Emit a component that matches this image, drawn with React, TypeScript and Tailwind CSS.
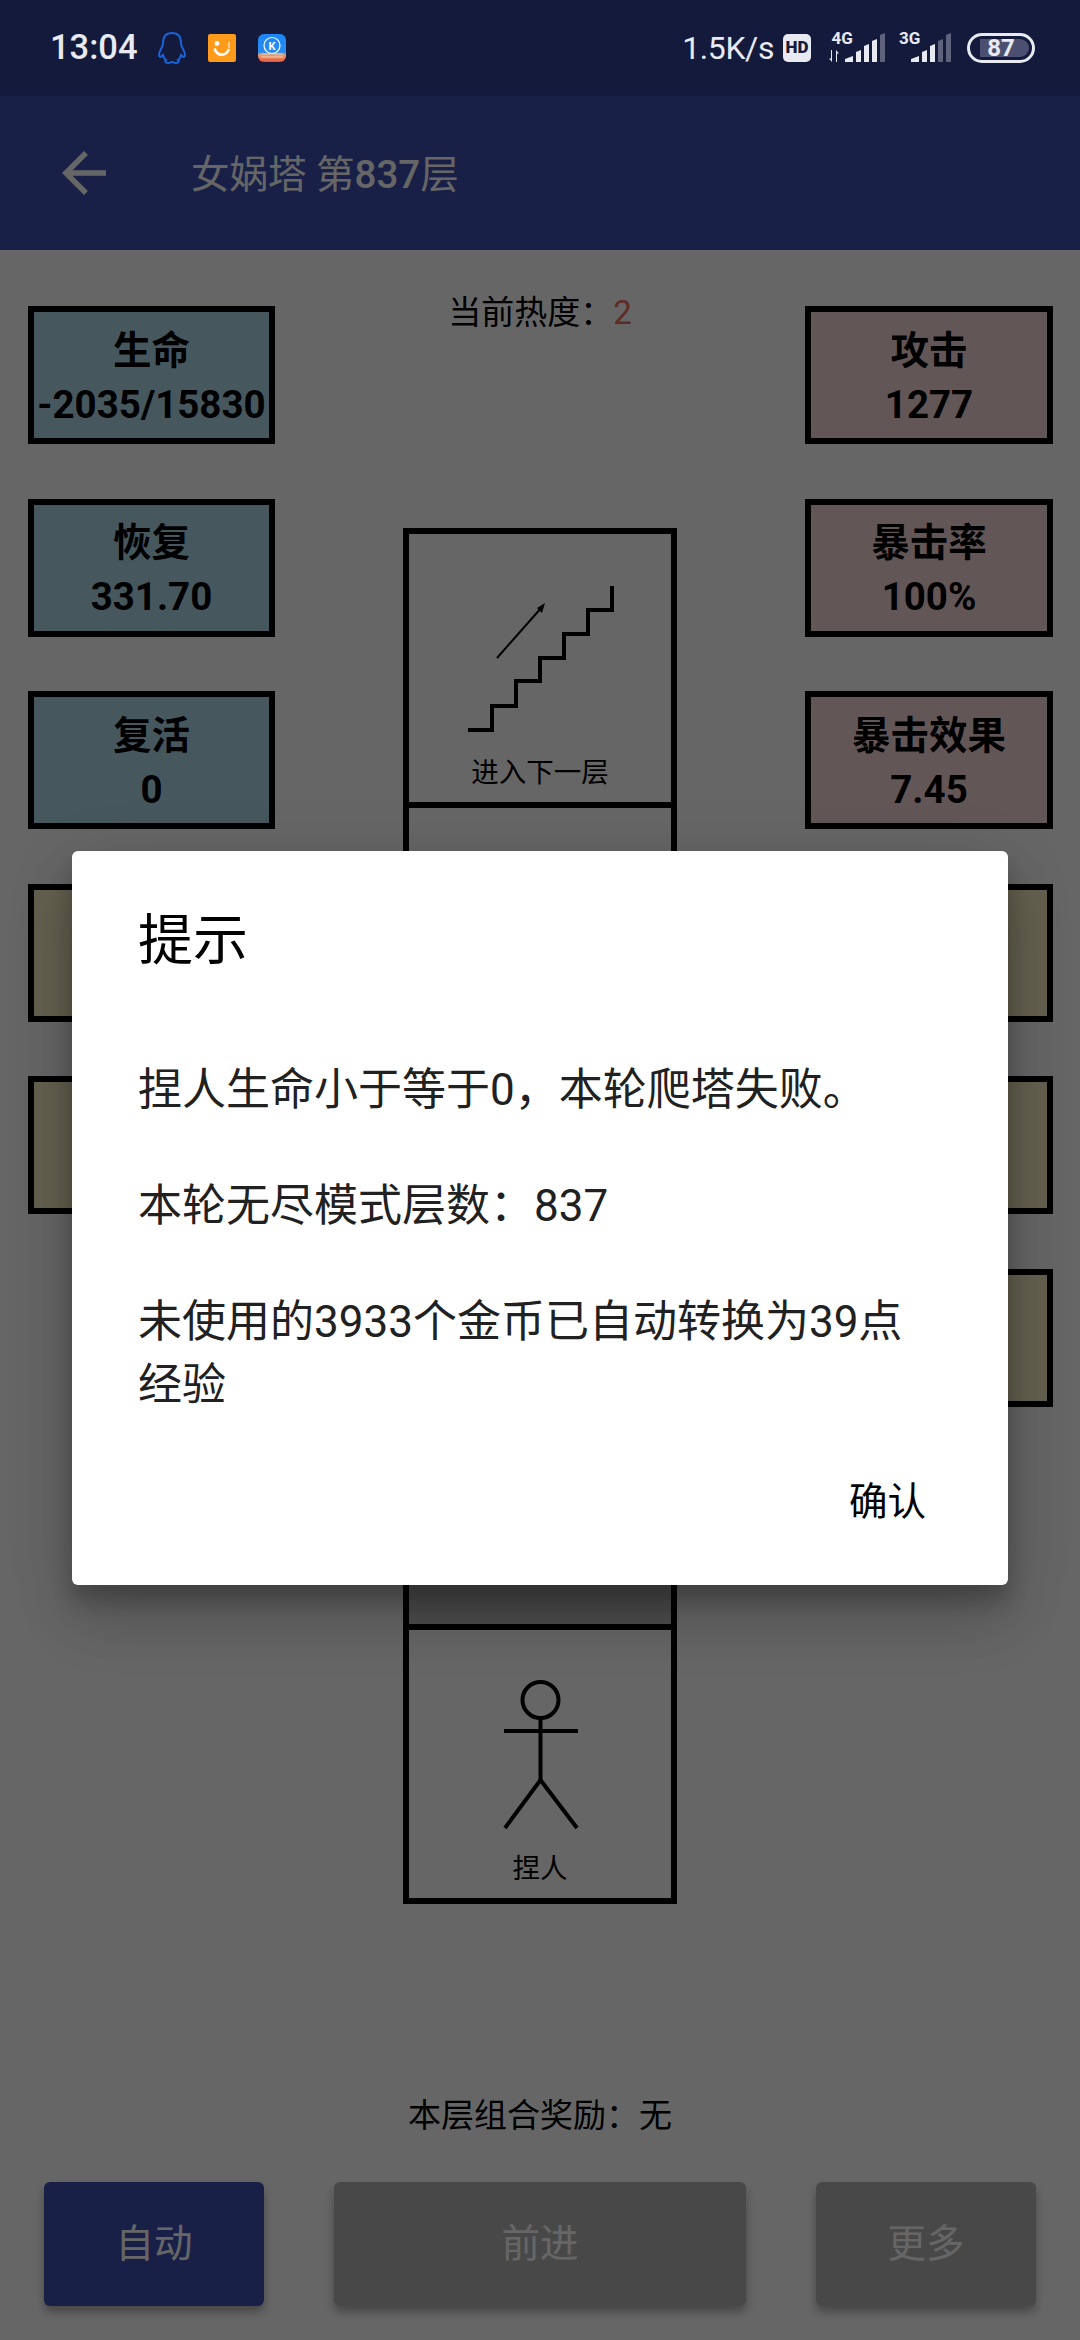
const leftStats = [
  { label: '生命', value: '-2035/15830', color: 'bg-[#b1d9ec]' },
  { label: '恢复', value: '331.70', color: 'bg-[#b1d9ec]' },
  { label: '复活', value: '0', color: 'bg-[#b1d9ec]' },
  { label: '', value: '', color: 'bg-[#faf2c8]' },
  { label: '', value: '', color: 'bg-[#faf2c8]' },
];

const rightStats = [
  { label: '攻击', value: '1277', color: 'bg-[#f8d6d6]' },
  { label: '暴击率', value: '100%', color: 'bg-[#f8d6d6]' },
  { label: '暴击效果', value: '7.45', color: 'bg-[#f8d6d6]' },
  { label: '', value: '', color: 'bg-[#faf2c8]' },
  { label: '', value: '', color: 'bg-[#faf2c8]' },
  { label: '', value: '', color: 'bg-[#faf2c8]' },
];

function StatBox({ label, value, color }: { label: string; value: string; color: string }) {
  return (
    <div className={`h-[138px] w-full shrink-0 border-[6px] border-black pt-[5px] ${color} flex flex-col items-center justify-center text-[38.5px] font-bold leading-[54px] text-black`}>
      <div>{label}</div>
      <div>{value}</div>
    </div>
  );
}

function QQIcon() {
  return (
    <svg width="30" height="32" viewBox="0 0 30 32" fill="none" stroke="#1a63d8" strokeWidth="2">
      <path d="M15 1C8 1 6 6 6 11C6 14 5 15 3.5 18C2 21 1.5 24 3 25C4 25 5 24 6 23C6.5 25 7 27 9 28C7.5 29 8 31 11 31C13 31 14 30 15 30C16 30 17 31 19 31C22 31 22.5 29 21 28C23 27 23.5 25 24 23C25 24 26 25 27 25C28.5 24 28 21 26.5 18C25 15 24 14 24 11C24 6 22 1 15 1Z" />
    </svg>
  );
}

function SmileIcon() {
  return (
    <svg width="28" height="28" viewBox="0 0 28 28">
      <rect width="28" height="28" rx="2" fill="#ff9a1a" />
      <circle cx="9" cy="9.5" r="2.4" fill="#fff" />
      <path d="M7 15.5C9 21.5 17 23 20.5 16" fill="none" stroke="#fff" strokeWidth="2.6" strokeLinecap="round" />
      <path d="M21 8V14" stroke="#fff" strokeWidth="1" />
    </svg>
  );
}

function KIcon() {
  return (
    <svg width="28" height="28" viewBox="0 0 28 28">
      <defs>
        <linearGradient id="kbg" x1="0" y1="0" x2="0" y2="1">
          <stop offset="0" stopColor="#1c86f6" />
          <stop offset="0.65" stopColor="#2a8cf0" />
          <stop offset="0.75" stopColor="#e8a070" />
          <stop offset="1" stopColor="#e9503a" />
        </linearGradient>
      </defs>
      <rect width="28" height="28" rx="6" fill="url(#kbg)" />
      <circle cx="14" cy="11.5" r="8" fill="none" stroke="#fff" strokeWidth="1.2" />
      <text x="14" y="15.5" textAnchor="middle" fontSize="11" fontWeight="700" fill="#fff" fontFamily="Roboto">K</text>
      <path d="M3 20H12M16 20H25M3 23H25" stroke="#f6d0b0" strokeWidth="1" />
    </svg>
  );
}

function Signal4G() {
  return (
    <svg width="57" height="36" viewBox="0 -6 57 36" fill="#e9eaf1">
      <text x="3.5" y="11" fontSize="17" fontWeight="700" fontFamily="Roboto">4G</text>
      <path d="M4 17V29L1 25.5H3V17ZM8 29V17L11 20.5H9V29Z" />
      <path d="M17 29V26L25 23V29ZM28 29V19L33 17V29ZM36 29V13L41 11V29ZM44 29V8L49 6V29Z" />
      <path d="M52 29V2L57 0V29Z" opacity="0.35" />
    </svg>
  );
}

function Signal3G() {
  return (
    <svg width="52" height="36" viewBox="0 -6 52 36" fill="#e9eaf1">
      <text x="0" y="11" fontSize="17" fontWeight="700" fontFamily="Roboto">3G</text>
      <path d="M12 29V26L20 23V29ZM23 29V19L28 17V29ZM31 29V13L36 11V29Z" />
      <path d="M39 29V8L44 6V29ZM47 29V2L52 0V29Z" opacity="0.35" />
    </svg>
  );
}

function Battery() {
  return (
    <div className="relative ml-[16px] h-[30px] w-[68px] rounded-full border-[3px] border-[#e9eaf1]">
      <div className="absolute left-[10px] top-[3px] h-[18px] w-[49px] rounded-l-[3px] rounded-r-full bg-[#4c5070]" />
      <div className="relative text-center text-[24px] font-bold leading-[24px] text-[#e9eaf1]">87</div>
    </div>
  );
}

function StatusBar() {
  return (
    <div className="relative z-10 flex h-[96px] shrink-0 items-center bg-[#141a3c] pl-[50px] pr-[45px] text-[#e9eaf1]">
      <span className="text-[34.5px] font-medium">13:04</span>
      <div className="ml-[19px]"><QQIcon /></div>
      <div className="ml-[21px]"><SmileIcon /></div>
      <div className="ml-[22px]"><KIcon /></div>
      <div className="flex-1" />
      <span className="text-[32px] tracking-[-0.4px]">1.5K/s</span>
      <div className="ml-[9px] flex h-[28px] w-[28px] items-center justify-center rounded-[5px] bg-[#e9eaf1] text-[17px] font-black text-[#141a3c]">HD</div>
      <div className="-mt-[6px] ml-[17px]"><Signal4G /></div>
      <div className="-mt-[6px] ml-[14px]"><Signal3G /></div>
      <Battery />
    </div>
  );
}

function Stairs() {
  return (
    <svg width="160" height="160" viewBox="0 0 160 160" fill="none" stroke="#000">
      <path d="M8 150H32V126H56V101H80V78H104V54H128V30H152V6" strokeWidth="4" />
      <path d="M37 78L82 27" strokeWidth="2" />
      <path d="M85 23L77 28L82 33Z" fill="#000" stroke="none" />
    </svg>
  );
}

function Person() {
  return (
    <svg width="80" height="150" viewBox="0 0 80 150" fill="none" stroke="#000" strokeWidth="4">
      <circle cx="40.5" cy="20" r="18" />
      <path d="M40.5 38V100M4 51H78" />
      <path d="M5 148L40.5 100L77 148" />
    </svg>
  );
}

function TowerColumn() {
  return (
    <div className="mt-[195px] w-[274px]">
      <div className="flex h-[280px] flex-col items-center border-[6px] border-black">
        <div className="mt-[46px]"><Stairs /></div>
        <div className="mt-[13px] text-[27.5px] leading-[40px] text-black">进入下一层</div>
      </div>
      <div className="-mt-[6px] h-[280px] border-[6px] border-black" />
      <div className="-mt-[6px] h-[280px] border-[6px] border-black" />
      <div className="-mt-[6px] h-[280px] border-[6px] border-black bg-[#c0c0c0]" />
      <div className="-mt-[6px] flex h-[280px] flex-col items-center border-[6px] border-black">
        <div className="mt-[50px]"><Person /></div>
        <div className="mt-[19px] text-[27.5px] leading-[40px] text-black">捏人</div>
      </div>
    </div>
  );
}

function Dialog() {
  return (
    <div className="h-[734px] w-[936px] rounded-[6px] bg-white pl-[66px] pr-[70px] shadow-[0_36px_60px_rgba(0,0,0,0.14),0_14px_70px_rgba(0,0,0,0.12),0_16px_20px_rgba(0,0,0,0.2)]">
      <div className="pt-[54px] text-[55px] leading-[70px] text-black">提示</div>
      <div className="mt-[84px] text-[44px] leading-[63px] text-[#212121]">
        <p>捏人生命小于等于0，本轮爬塔失败。</p>
        <p className="mt-[53px]">本轮无尽模式层数：837</p>
        <p className="mt-[53px]">未使用的3933个金币已自动转换为39点经验</p>
      </div>
      <div className="mt-[60px] pr-[12px] text-right text-[38.5px] leading-[50px] text-black">确认</div>
    </div>
  );
}

export default function App() {
  return (
    <div className="relative flex h-[2340px] w-[1080px] flex-col overflow-hidden bg-white font-[Roboto,'Noto_Sans_CJK_SC',sans-serif]">
      <StatusBar />

      <div className="flex h-[154px] shrink-0 items-center bg-[#3f51b5] pl-[51px] text-white">
        <svg width="66" height="66" viewBox="0 0 24 24" fill="#fff">
          <path d="M20 11H7.83l5.59-5.59L12 4l-8 8 8 8 1.41-1.41L7.83 13H20v-2z" />
        </svg>
        <div className="ml-[74px] mt-[4px] text-[38.5px]">女娲塔 第<span className="font-medium">837</span>层</div>
      </div>

      <div className="flex flex-1 justify-between pl-[28px] pr-[27px]">
        <div className="flex w-[247px] flex-col gap-[54.5px] pt-[56px]">
          {leftStats.map((s, i) => <StatBox key={i} {...s} />)}
        </div>
        <div className="flex flex-col items-center pt-[41px]">
          <div className="text-[33px] leading-[44px] text-black">
            当前热度：<span className="text-[#ea6b5f]">2</span>
          </div>
          <div className="-mt-[2px]"><TowerColumn /></div>
        </div>
        <div className="flex w-[248px] flex-col gap-[54.5px] pt-[56px]">
          {rightStats.map((s, i) => <StatBox key={i} {...s} />)}
        </div>
      </div>

      <div className="shrink-0 pb-[34px]">
        <div className="text-center text-[33px] leading-[44px] text-black">本层组合奖励：无</div>
        <div className="mt-[44px] flex gap-[70px] px-[44px] text-[38.5px] text-white">
          <div className="flex h-[124px] w-[220px] items-center justify-center rounded-[6px] bg-[#3f51b5] shadow-[0_6px_10px_rgba(0,0,0,0.3)]">自动</div>
          <div className="flex h-[124px] w-[412px] items-center justify-center rounded-[6px] bg-[#b4b4b4] shadow-[0_6px_10px_rgba(0,0,0,0.3)]">前进</div>
          <div className="flex h-[124px] w-[220px] items-center justify-center rounded-[6px] bg-[#b4b4b4] shadow-[0_6px_10px_rgba(0,0,0,0.3)]">更多</div>
        </div>
      </div>

      <div className="absolute inset-x-0 bottom-0 top-[96px] flex items-center justify-center bg-black/60">
        <Dialog />
      </div>
    </div>
  );
}
